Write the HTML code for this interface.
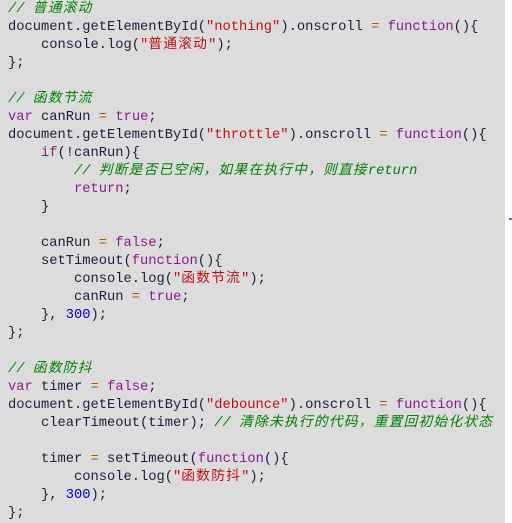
<!DOCTYPE html>
<html><head><meta charset="utf-8"><style>
html,body{margin:0;padding:0;background:#fff;width:512px;height:523px;overflow:hidden}
#b{position:absolute;left:0;top:0;width:505px;height:523px;background:#dcdcdc}
pre{position:absolute;left:8px;top:1px;margin:0;font-family:"Liberation Mono","Noto Sans CJK SC",monospace;font-size:13.75px;line-height:18px;color:#1e1e3c;white-space:pre}
.c{color:#008000;font-style:italic}
.s{color:#c01010}
.k{color:#8b1a8b}
.o{color:#b35a00}
.n{color:#0000cc}
i{font-style:inherit;letter-spacing:1.2px}
#dot{position:absolute;left:509px;top:218px;width:3px;height:2px;background:#4a7ad0}
</style></head><body><div id="b"></div><div id="dot"></div>
<pre><span class="c">// <i>普通滚动</i></span>
document.getElementById(<span class="s">"nothing"</span>).onscroll <span class="o">=</span> <span class="k">function</span>(){
    console.log(<span class="s">"<i>普通滚动</i>"</span>);
};

<span class="c">// <i>函数节流</i></span>
<span class="k">var</span> canRun <span class="o">=</span> <span class="k">true</span>;
document.getElementById(<span class="s">"throttle"</span>).onscroll <span class="o">=</span> <span class="k">function</span>(){
    <span class="k">if</span>(!canRun){
        <span class="c">// <i>判断是否已空闲，如果在执行中，则直接</i>return</span>
        <span class="k">return</span>;
    }

    canRun <span class="o">=</span> <span class="k">false</span>;
    setTimeout(<span class="k">function</span>(){
        console.log(<span class="s">"<i>函数节流</i>"</span>);
        canRun <span class="o">=</span> <span class="k">true</span>;
    }, <span class="n">300</span>);
};

<span class="c">// <i>函数防抖</i></span>
<span class="k">var</span> timer <span class="o">=</span> <span class="k">false</span>;
document.getElementById(<span class="s">"debounce"</span>).onscroll <span class="o">=</span> <span class="k">function</span>(){
    clearTimeout(timer); <span class="c">// <i>清除未执行的代码，重置回初始化状态</i></span>

    timer <span class="o">=</span> setTimeout(<span class="k">function</span>(){
        console.log(<span class="s">"<i>函数防抖</i>"</span>);
    }, <span class="n">300</span>);
};</pre>
</body></html>
